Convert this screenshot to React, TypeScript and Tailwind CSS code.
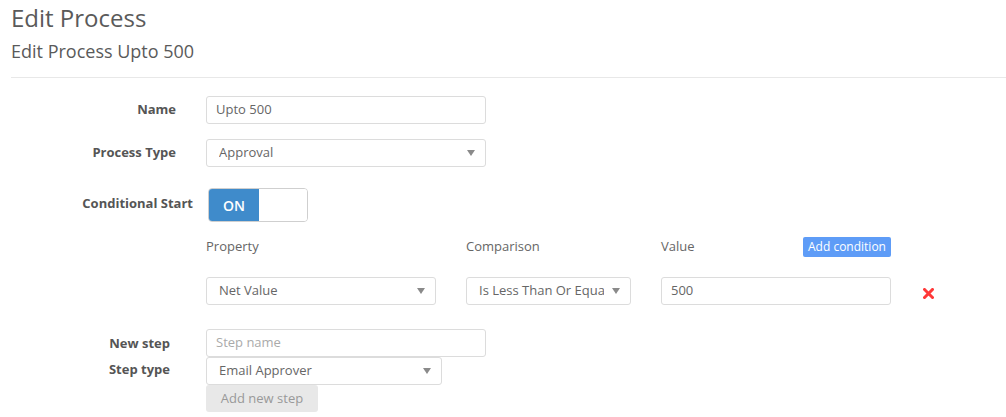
import React from "react";

function Arrow() {
  return (
    <svg width="8" height="6" viewBox="0 0 8 6" className="absolute right-[10px] top-1/2 -translate-y-1/2">
      <path d="M0 0 L8 0 L4 6 Z" fill="#8a8a8a" />
    </svg>
  );
}

function Select({ w, text }: { w: string; text: string }) {
  return (
    <div className={`relative h-[28px] ${w} border border-[#dcdcdc] rounded-[3px] bg-white flex items-center pl-[12px] pr-[26px] text-[13px] text-[#666] whitespace-nowrap`}>
      <span className="block min-w-0 flex-1 overflow-hidden">{text}</span>
      <Arrow />
    </div>
  );
}

export default function App() {
  return (
    <div className="font-['Open_Sans',sans-serif] bg-white w-[1006px] h-[417px] overflow-hidden">
      <div className="pl-[11px]">
        <div className="text-[24px] leading-[32px] text-[#5a5a5a] pt-[2px]">Edit Process</div>
        <div className="text-[18px] leading-[24px] text-[#5a5a5a] mt-[5px]">Edit Process Upto 500</div>
        <div className="h-px bg-[#e8e8e8] mt-[14px]" />

        {/* Name */}
        <div className="flex items-center mt-[18px] h-[28px]">
          <div className="w-[165px] text-right text-[13px] font-bold text-[#555]">Name</div>
          <div className="ml-[30px] w-[280px] h-[28px] border border-[#dcdcdc] rounded-[3px] flex items-center pl-[9px] text-[13px] text-[#666]">Upto 500</div>
        </div>

        {/* Process Type */}
        <div className="flex items-center mt-[15px] h-[28px]">
          <div className="w-[165px] text-right text-[13px] font-bold text-[#555]">Process Type</div>
          <div className="ml-[30px]">
            <Select w="w-[280px]" text="Approval" />
          </div>
        </div>

        {/* Conditional Start */}
        <div className="flex items-center mt-[21px] h-[34px]">
          <div className="w-[182px] text-right text-[13px] font-bold text-[#555] whitespace-nowrap -mt-[2px]">Conditional Start</div>
          <div className="ml-[15px] w-[100px] h-[34px] border border-[#cfcfcf] rounded-[4px] flex overflow-hidden">
            <div className="w-[50px] h-full bg-[#3f8bcb] text-white text-[14px] font-semibold flex items-center justify-center">ON</div>
            <div className="flex-1 bg-white" />
          </div>
        </div>

        {/* Condition headers */}
        <div className="flex items-center ml-[195px] mt-[15px] h-[20px] text-[13px] text-[#666]">
          <div className="w-[260px]">Property</div>
          <div className="w-[195px]">Comparison</div>
          <div className="w-[142px]">Value</div>
          <div className="h-[20px] px-[5px] bg-[#5e9cf7] text-white text-[12px] rounded-[2px] flex items-center">Add condition</div>
        </div>

        {/* Condition row */}
        <div className="flex items-center ml-[195px] mt-[20px] h-[28px]">
          <Select w="w-[230px]" text="Net Value" />
          <div className="ml-[30px]">
            <Select w="w-[165px]" text="Is Less Than Or Equal To" />
          </div>
          <div className="ml-[30px] w-[230px] h-[28px] border border-[#dcdcdc] rounded-[3px] flex items-center pl-[9px] text-[13px] text-[#666]">500</div>
          <svg width="11" height="11" viewBox="0 0 11 11" className="ml-[32px] mt-[5px]">
            <path d="M1.5 1.5 L9.5 9.5 M9.5 1.5 L1.5 9.5" stroke="#ff3838" strokeWidth="3" strokeLinecap="square" />
          </svg>
        </div>

        {/* New step */}
        <div className="flex items-center mt-[24px] h-[28px]">
          <div className="w-[159px] text-right text-[13px] font-bold text-[#555] mt-[2px]">New step</div>
          <div className="ml-[36px] w-[280px] h-[28px] border border-[#dcdcdc] rounded-[3px] flex items-center pl-[9px] text-[13px] text-[#aaa]">Step name</div>
        </div>

        {/* Step type */}
        <div className="flex items-start h-[28px]">
          <div className="w-[159px] text-right text-[13px] font-bold text-[#555] mt-[3px]">Step type</div>
          <div className="ml-[36px]">
            <Select w="w-[236px]" text="Email Approver" />
          </div>
        </div>

        <div className="ml-[195px] w-[112px] h-[27px] bg-[#e8e8e8] rounded-[3px] flex items-center justify-center text-[13px] text-[#999]">Add new step</div>
      </div>
    </div>
  );
}
